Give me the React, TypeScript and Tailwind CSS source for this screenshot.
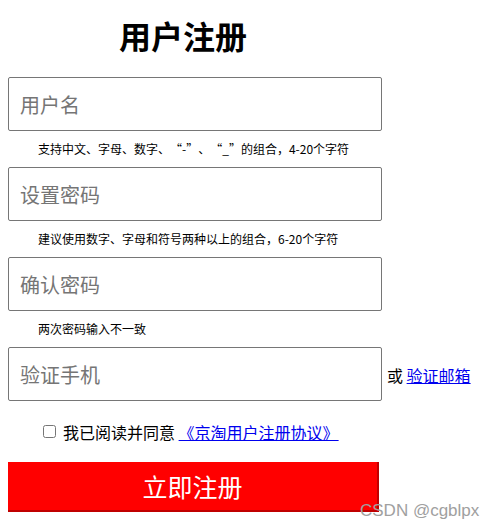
import React from 'react';

const cjk = { fontFamily: '"Noto Sans CJK SC", "Liberation Sans", sans-serif' };

function Field({ placeholder, type = 'text' }: { placeholder: string; type?: string }) {
  return (
    <input
      type={type}
      placeholder={placeholder}
      className="w-[374px] h-[54px] border border-[#767676] rounded-[2px] px-[11px] text-[20px] text-black placeholder:text-[#757575] outline-none"
      style={cjk}
    />
  );
}

function Hint({ children }: { children: React.ReactNode }) {
  return (
    <div className="h-[36px] flex items-center pl-[30px] text-[12px] text-black" style={cjk}>
      <span>{children}</span>
    </div>
  );
}

// full-width curly quotes, as the reference font draws them
const LQ = () => <span className="inline-block w-[12px] text-right">“</span>;
const RQ = () => <span className="inline-block w-[12px] text-left">”</span>;

export default function App() {
  return (
    <div lang="zh-CN" className="relative w-[499px] h-[530px] bg-white overflow-hidden" style={cjk}>
      <div className="px-[8px] pt-[15px]">
        <h1 className="w-[350px] text-center text-[32px] leading-[40px] font-bold text-black">用户注册</h1>

        <div className="mt-[22px] flex flex-col">
          <Field placeholder="用户名" />
          <Hint>
            支持中文、字母、数字、<LQ />-<RQ />、<LQ />_<RQ />的组合，4-20个字符
          </Hint>
          <Field placeholder="设置密码" type="password" />
          <Hint>建议使用数字、字母和符号两种以上的组合，6-20个字符</Hint>
          <Field placeholder="确认密码" type="password" />
          <Hint>两次密码输入不一致</Hint>
          <div className="flex items-end gap-[5px]">
            <Field placeholder="验证手机" />
            <div className="pb-[16px] text-[16px] leading-[20px] text-black">
              或 <a href="#" className="text-[#0000ee] underline">验证邮箱</a>
            </div>
          </div>

          <div className="h-[61px] flex items-center pl-[35px]">
            <input type="checkbox" className="w-[13px] h-[13px] m-0" />
            <span className="ml-[7px] text-[16px] text-black">
              我已阅读并同意 <a href="#" className="text-[#0000ee] underline">《京淘用户注册协议》</a>
            </span>
          </div>

          <button className="w-[371px] h-[50px] bg-[#ff0000] border-r-2 border-b-2 border-[#c00000] text-white text-[25px] leading-none">
            立即注册
          </button>
        </div>
      </div>

      <div
        className="absolute left-[360px] top-[498px] text-[17px] text-[#a0a0a0]"
        style={{ fontFamily: '"Liberation Sans", Arial, sans-serif' }}
      >
        CSDN @cgblpx
      </div>
    </div>
  );
}
